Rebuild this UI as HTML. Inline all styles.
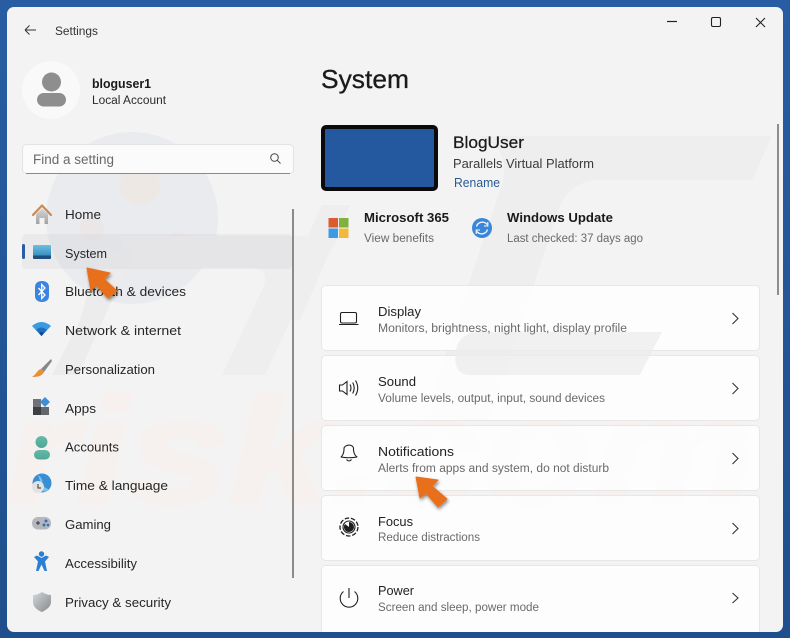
<!DOCTYPE html>
<html lang="en"><head><meta charset="utf-8"><title>Settings</title>
<style>
html,body{margin:0;padding:0;width:790px;height:638px;overflow:hidden;background:#25599d}
svg{display:block;filter:blur(.3px)}
text{font-family:"Liberation Sans",sans-serif}
.n{font-size:13px;fill:#262626}
.t{font-size:13px;fill:#222}
.s{font-size:11.5px;fill:#6a6a6a}
</style></head><body>
<svg width="790" height="638" viewBox="0 0 790 638" xmlns="http://www.w3.org/2000/svg">
<defs>
<clipPath id="w"><rect x="7" y="7" width="776" height="625" rx="7"/></clipPath>
<linearGradient id="bg" x1="0" y1="0" x2="0" y2="1"><stop offset="0" stop-color="#285da3"/><stop offset="1" stop-color="#1f4f8c"/></linearGradient>
<linearGradient id="sys" x1="0" y1="0" x2="0" y2="1"><stop offset="0" stop-color="#6cc0df"/><stop offset=".75" stop-color="#3a8fc0"/><stop offset=".76" stop-color="#1f4f80"/><stop offset="1" stop-color="#1f4f80"/></linearGradient>
<linearGradient id="home" x1="0" y1="0" x2="0" y2="1"><stop offset="0" stop-color="#d6d6d6"/><stop offset="1" stop-color="#a2a2a2"/></linearGradient>
<linearGradient id="acc" x1="0" y1="0" x2="0" y2="1"><stop offset="0" stop-color="#66b9a8"/><stop offset="1" stop-color="#4ea896"/></linearGradient>
<linearGradient id="shield" x1="0" y1="0" x2="1" y2="1"><stop offset="0" stop-color="#d4d6d8"/><stop offset="1" stop-color="#868a8e"/></linearGradient>
<filter id="sh" x="-30%" y="-30%" width="170%" height="170%"><feDropShadow dx="1" dy="2" stdDeviation="1.6" flood-color="#000" flood-opacity=".45"/></filter>
</defs>
<rect width="790" height="638" fill="url(#bg)"/>
<rect x="7" y="7" width="776" height="625" rx="7" fill="#f3f3f3"/>
<g clip-path="url(#w)">
  <!-- watermark -->
  <circle cx="132" cy="218" r="86" fill="#e9ebee"/>
  <circle cx="140" cy="185" r="20" fill="#eee8e5"/>
  <circle cx="92" cy="228" r="12" fill="#ebe7e6"/>
  <circle cx="177" cy="240" r="9" fill="#ece8e7"/>
  <path d="M478 136 L772 136 L752 180 L600 180 Q570 180 558 210 L490 420 L430 420 Q436 380 450 340 L500 190 Q515 150 478 136 Z" fill="#eeeeee"/>
  <path d="M120 236 L340 236 Q322 262 300 300 L265 375 L222 375 L262 290 Q272 268 250 268 L130 268 Z" fill="#eeeeee"/>
  <path d="M52 375 L80 320 L100 250 L135 250 L78 375 Z" fill="#ececec"/>
  <path d="M322 205 L350 205 L300 320 L270 320 Z" fill="#eeeeee"/>
  <text x="6" y="503" font-size="150" font-weight="700" font-style="italic" textLength="750" lengthAdjust="spacingAndGlyphs" stroke="#f6f1ee" stroke-width="4" style="fill:#f6f1ee">risk.com</text>

  <!-- selected nav -->
  <rect x="22" y="234" width="270" height="35" rx="4" fill="#b8bcc4" opacity=".16"/>
  <rect x="22" y="244" width="3" height="15" rx="1.5" fill="#2a5ca6"/>
  <!-- sidebar scrollbar -->
  <rect x="292" y="209" width="2" height="369" fill="#8b8b8b"/>
  <!-- main scrollbar -->
  <rect x="777" y="124" width="2" height="171" fill="#8d8d8d"/>

  <!-- cards -->
  <g fill="#fff" fill-opacity=".8" stroke="#e7e7e7">
    <rect x="321.500" y="285.500" width="438" height="65" rx="4"/>
    <rect x="321.500" y="355.500" width="438" height="65" rx="4"/>
    <rect x="321.500" y="425.500" width="438" height="65" rx="4"/>
    <rect x="321.500" y="495.500" width="438" height="65" rx="4"/>
    <rect x="321.500" y="565.500" width="438" height="70" rx="4"/>
  </g>
  <path d="M480 332 L662 332 L640 375 L470 375 Q452 375 456 350 Q460 332 480 332 Z" fill="#ececec" opacity=".75"/>
</g>

<!-- title bar -->
<path d="M25 30 H36 M25 30 L29.500 25.500 M25 30 L29.500 34.500" fill="none" stroke="#333" stroke-width="1"/>
<text x="55" y="35" font-size="11.500" fill="#333" textLength="43" lengthAdjust="spacingAndGlyphs">Settings</text>
<path d="M667 21.500 H677" stroke="#222" stroke-width="1.200"/>
<rect x="711.500" y="17.500" width="9" height="9" rx="1.500" fill="none" stroke="#222" stroke-width="1.100"/>
<path d="M756 18 L765 27 M765 18 L756 27" stroke="#222" stroke-width="1.100"/>

<!-- user -->
<circle cx="51" cy="90" r="29" fill="#f9f9f9"/>
<circle cx="51.500" cy="82" r="9.500" fill="#8e8e8e"/>
<rect x="37" y="93" width="29" height="13.500" rx="6.700" fill="#8e8e8e"/>
<text x="92" y="88" font-size="13" font-weight="700" fill="#1a1a1a" textLength="59" lengthAdjust="spacingAndGlyphs">bloguser1</text>
<text x="92" y="104" font-size="11.500" fill="#2a2a2a" textLength="74" lengthAdjust="spacingAndGlyphs">Local Account</text>

<!-- search -->
<rect x="22.500" y="144.500" width="271" height="29" rx="4" fill="#fbfbfb" stroke="#e3e3e3"/>
<path d="M26 173.500 H290" stroke="#8a8a8a" stroke-width="1"/>
<text x="33" y="164" font-size="13.500" fill="#6a6a6a" textLength="81" lengthAdjust="spacingAndGlyphs">Find a setting</text>
<circle cx="274.500" cy="157.500" r="3.800" fill="none" stroke="#444" stroke-width="1"/>
<path d="M277.300 160.300 L280.500 163.500" stroke="#444" stroke-width="1"/>

<!-- nav icons -->
<path d="M36 214 L42 208.500 L48 214 V224 H44.500 V218 H39.500 V224 H36 Z" fill="url(#home)"/>
<path d="M33 215 L42 205.500 L51 215" fill="none" stroke="#c98a55" stroke-width="2.200" stroke-linejoin="round" stroke-linecap="round"/>
<rect x="33" y="245" width="18" height="14" rx="1" fill="url(#sys)"/>
<path d="M42 281 C46 281 49 283 49 287 V296 C49 300 46 302 42 302 C38 302 35 300 35 296 V287 C35 283 38 281 42 281 Z" fill="#3d83e0"/>
<path d="M38.500 288 L45 295 L41.700 298.500 V284.500 L45 288 L38.500 295" fill="none" stroke="#fff" stroke-width="1.300"/>
<path d="M32 326 Q41.500 318 51 326 L41.500 336 Z" fill="#3c9be0"/>
<path d="M36 330 Q41.500 325 47 330 L41.500 336 Z" fill="#1f6fc0"/>
<path d="M39 333 Q41.500 331 44 333 L41.500 336 Z" fill="#15477f"/>
<path d="M51 359 L41 369 L44 372 L52 361 Z" fill="#85878c"/>
<path d="M41 369 L44 372 C42 376 38 377 32 377 C36 375 37 370 41 369 Z" fill="#ef8b32"/>
<rect x="33" y="399" width="8" height="8" fill="#6f7276"/>
<rect x="33" y="407" width="8" height="8" fill="#3d3f42"/>
<rect x="41" y="407" width="8" height="8" fill="#64676b"/>
<path d="M45 397 L50 402 L45 407 L40 402 Z" fill="#3e8ed9"/>
<circle cx="41.500" cy="442" r="6" fill="url(#acc)"/>
<rect x="34" y="450" width="16" height="9.500" rx="4.800" fill="url(#acc)"/>
<circle cx="42" cy="483" r="9.500" fill="#3a8fd4"/>
<path d="M38 475 Q44 479 42 486 Q47 488 49 490 L44 492 Z" fill="#7fc1ea"/>
<circle cx="38" cy="487" r="6" fill="#e2e2e2"/>
<path d="M38 484 V488 H41" fill="none" stroke="#333" stroke-width="1"/>
<rect x="32" y="517" width="19" height="12.500" rx="6" fill="#b4b8be"/>
<path d="M36 523 H40 M38 521 V525" stroke="#333" stroke-width="1"/>
<circle cx="46" cy="521" r="1.500" fill="#3a6fb8"/><circle cx="44" cy="525" r="1.500" fill="#3a6fb8"/><circle cx="48" cy="525" r="1.300" fill="#3a6fb8"/>
<circle cx="41.500" cy="554" r="2.700" fill="#2a7fd5"/>
<path d="M34 557 L37 555.500 L41.500 558 L46 555.500 L49 557 L45 561.500 L47 571 L44.500 571 L41.500 564.500 L38.500 571 L36 571 L38 561.500 Z" fill="#2a7fd5"/>
<path d="M42 592 Q47 595 51 595 V602 C51 607 46 610 42 612 C37 610 33 607 33 602 V595 Q37 595 42 592 Z" fill="url(#shield)"/>

<!-- nav text -->
<text class="n" x="65" y="219" textLength="36" lengthAdjust="spacingAndGlyphs">Home</text>
<text class="n" x="65" y="258" textLength="42" lengthAdjust="spacingAndGlyphs">System</text>
<text class="n" x="65" y="296" textLength="121" lengthAdjust="spacingAndGlyphs">Bluetooth &amp; devices</text>
<text class="n" x="65" y="335" textLength="116" lengthAdjust="spacingAndGlyphs">Network &amp; internet</text>
<text class="n" x="65" y="374" textLength="90" lengthAdjust="spacingAndGlyphs">Personalization</text>
<text class="n" x="65" y="413" textLength="31" lengthAdjust="spacingAndGlyphs">Apps</text>
<text class="n" x="65" y="451.500" textLength="54" lengthAdjust="spacingAndGlyphs">Accounts</text>
<text class="n" x="65" y="490" textLength="103" lengthAdjust="spacingAndGlyphs">Time &amp; language</text>
<text class="n" x="65" y="529" textLength="46" lengthAdjust="spacingAndGlyphs">Gaming</text>
<text class="n" x="65" y="568" textLength="72" lengthAdjust="spacingAndGlyphs">Accessibility</text>
<text class="n" x="65" y="607" textLength="106" lengthAdjust="spacingAndGlyphs">Privacy &amp; security</text>

<!-- header -->
<text x="321" y="88" font-size="26" fill="#1a1a1a" stroke="#1a1a1a" stroke-width=".3" textLength="88" lengthAdjust="spacingAndGlyphs">System</text>
<rect x="323" y="127" width="113" height="62" rx="3" fill="#25599f" stroke="#0a0a0d" stroke-width="4"/>
<text x="453" y="148" font-size="17" fill="#1a1a1a" stroke="#1a1a1a" stroke-width=".25" textLength="71" lengthAdjust="spacingAndGlyphs">BlogUser</text>
<text x="453" y="168" font-size="13" fill="#3a3a3a" textLength="141" lengthAdjust="spacingAndGlyphs">Parallels Virtual Platform</text>
<text x="454" y="187" font-size="13" fill="#2b5a96" textLength="46" lengthAdjust="spacingAndGlyphs">Rename</text>

<rect x="328.500" y="218" width="9.500" height="9.500" fill="#dd5a2f"/>
<rect x="339" y="218" width="9.500" height="9.500" fill="#7fb13c"/>
<rect x="328.500" y="228.500" width="9.500" height="9.500" fill="#3f9ae6"/>
<rect x="339" y="228.500" width="9.500" height="9.500" fill="#f2b83a"/>
<text x="364" y="222" font-size="13" font-weight="700" fill="#1a1a1a" textLength="85" lengthAdjust="spacingAndGlyphs">Microsoft 365</text>
<text x="364" y="242" class="s" textLength="70" lengthAdjust="spacingAndGlyphs">View benefits</text>
<circle cx="482" cy="228" r="10" fill="#3b86d6"/>
<path d="M476.500 226.500 A6 6 0 0 1 487 224.500 M487.500 229.500 A6 6 0 0 1 477 231.500" fill="none" stroke="#fff" stroke-width="1.300"/>
<path d="M487.800 222 V226 H484 M476.200 234 V230 H480" fill="none" stroke="#fff" stroke-width="1.100"/>
<text x="507" y="222" font-size="13" font-weight="700" fill="#1a1a1a" textLength="106" lengthAdjust="spacingAndGlyphs">Windows Update</text>
<text x="507" y="242" class="s" textLength="136" lengthAdjust="spacingAndGlyphs">Last checked: 37 days ago</text>

<!-- card icons -->
<g fill="none" stroke="#1f1f1f" stroke-width="1.100">
  <rect x="340.500" y="312.500" width="16" height="10.500" rx="1.500"/>
  <path d="M339 324.500 H358.500"/>
  <path d="M339.500 385 H342.500 L347 381.500 V394.500 L342.500 391 H339.500 Z"/>
  <path d="M350 384.500 Q352 388 350 391.500 M352.700 382.500 Q355.700 388 352.700 393.500 M355.500 380.500 Q360 388 355.500 395.500"/>
  <path d="M341 459 Q343.500 457 344 452 V450 Q345 447.500 349 447 Q353 447.500 353.500 450 V452 Q354 457 357 459 Q349 460.500 341 459 Z" stroke-linejoin="round" transform="translate(0 -2)"/>
  <path d="M346.500 459.500 Q349 462.500 351.500 459.500"/>
  <circle cx="349" cy="527" r="9" stroke-dasharray="4.500 1.800" stroke-width="1.300"/>
  <circle cx="349" cy="527" r="6"/>
  <path d="M343.500 591.500 A8.800 8.800 0 1 0 354.500 591.500 M349 588 V598"/>
  <path d="M732.500 313 L738 318.500 L732.500 324 M732.500 383 L738 388.500 L732.500 394 M732.500 453 L738 458.500 L732.500 464 M732.500 523 L738 528.500 L732.500 534 M732.500 593 L738 598 L732.500 603" stroke="#333"/>
</g>
<path d="M349 522 A5 5 0 0 1 349 532 A5 5 0 0 1 345 524 L349 527 Z" fill="#1f1f1f"/>

<!-- card text -->
<text class="t" x="378" y="316" textLength="43" lengthAdjust="spacingAndGlyphs">Display</text>
<text class="s" x="378" y="332" textLength="249" lengthAdjust="spacingAndGlyphs">Monitors, brightness, night light, display profile</text>
<text class="t" x="378" y="386" textLength="38" lengthAdjust="spacingAndGlyphs">Sound</text>
<text class="s" x="378" y="402" textLength="227" lengthAdjust="spacingAndGlyphs">Volume levels, output, input, sound devices</text>
<text class="t" x="378" y="456" textLength="76" lengthAdjust="spacingAndGlyphs">Notifications</text>
<text class="s" x="378" y="472" textLength="231" lengthAdjust="spacingAndGlyphs">Alerts from apps and system, do not disturb</text>
<text class="t" x="378" y="526" textLength="35" lengthAdjust="spacingAndGlyphs">Focus</text>
<text class="s" x="378" y="541" textLength="102" lengthAdjust="spacingAndGlyphs">Reduce distractions</text>
<text class="t" x="378" y="595" textLength="36" lengthAdjust="spacingAndGlyphs">Power</text>
<text class="s" x="378" y="611" textLength="161" lengthAdjust="spacingAndGlyphs">Screen and sleep, power mode</text>

<!-- arrows -->
<path d="M87 268 L110 273 L104 279 L117 291 L108 298 L96 285 L91 291 Z" fill="#e8701f" stroke="#e8701f" stroke-width="1" stroke-linejoin="round" filter="url(#sh)"/>
<path d="M416 477 L438 480 L432 486 L447 499 L438 507 L426 493 L420 498 Z" fill="#e8701f" stroke="#e8701f" stroke-width="1" stroke-linejoin="round" filter="url(#sh)"/>
</svg>
</body></html>
